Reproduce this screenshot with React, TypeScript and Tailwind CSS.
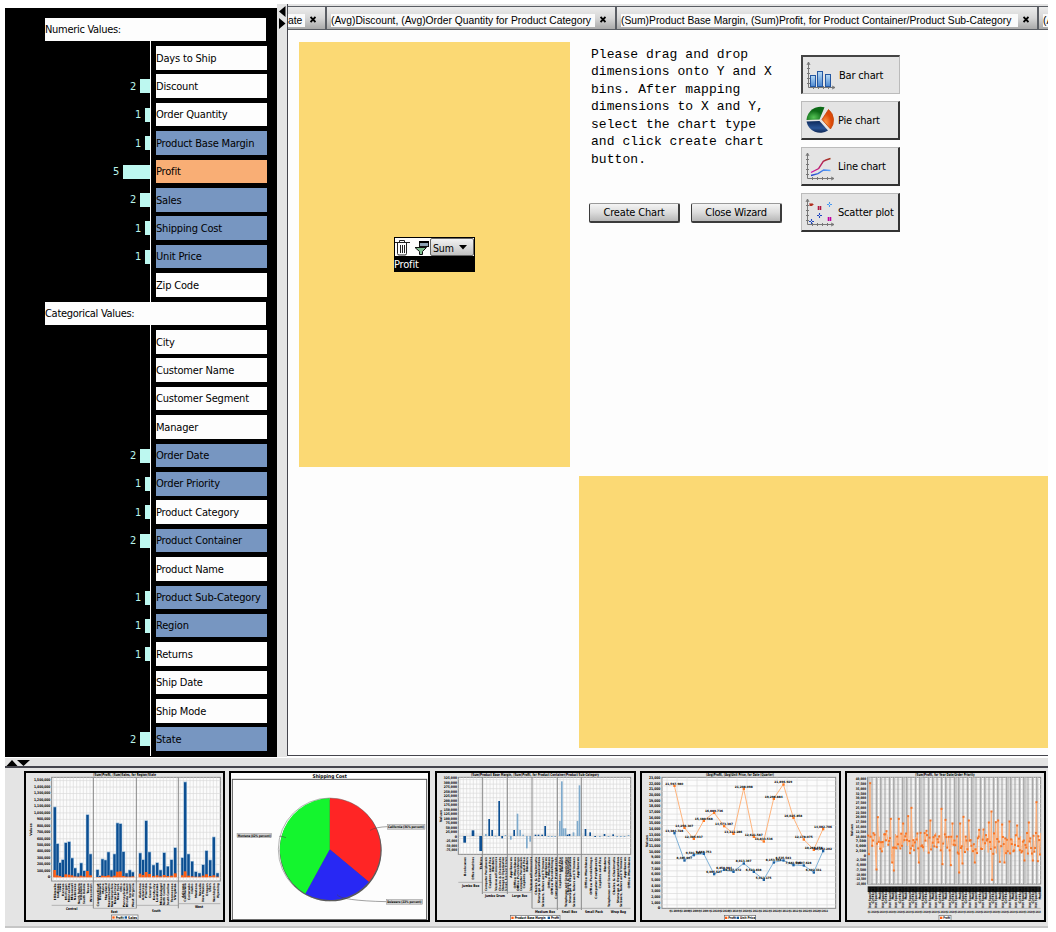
import React from "react";

type Tone = "white" | "blue" | "orange";
type Field = { name: string; count?: number; tone: Tone };

const numeric: Field[] = [
  { name: "Days to Ship", tone: "white" },
  { name: "Discount", count: 2, tone: "white" },
  { name: "Order Quantity", count: 1, tone: "white" },
  { name: "Product Base Margin", count: 1, tone: "blue" },
  { name: "Profit", count: 5, tone: "orange" },
  { name: "Sales", count: 2, tone: "blue" },
  { name: "Shipping Cost", count: 1, tone: "blue" },
  { name: "Unit Price", count: 1, tone: "blue" },
  { name: "Zip Code", tone: "white" },
];

const categorical: Field[] = [
  { name: "City", tone: "white" },
  { name: "Customer Name", tone: "white" },
  { name: "Customer Segment", tone: "white" },
  { name: "Manager", tone: "white" },
  { name: "Order Date", count: 2, tone: "blue" },
  { name: "Order Priority", count: 1, tone: "blue" },
  { name: "Product Category", count: 1, tone: "white" },
  { name: "Product Container", count: 2, tone: "blue" },
  { name: "Product Name", tone: "white" },
  { name: "Product Sub-Category", count: 1, tone: "blue" },
  { name: "Region", count: 1, tone: "blue" },
  { name: "Returns", count: 1, tone: "white" },
  { name: "Ship Date", tone: "white" },
  { name: "Ship Mode", tone: "white" },
  { name: "State", count: 2, tone: "blue" },
];

const toneClass: Record<Tone, string> = {
  white: "bg-[#fdfdfd]",
  blue: "bg-[#7796c1]",
  orange: "bg-[#f9ae75]",
};

function SectionHeader({ title }: { title: string }) {
  return (
    <div className="h-[28.4px]">
      <div className="ml-[40px] flex h-[23.4px] w-[221px] items-center bg-[#fdfdfd] pt-[2px] tracking-[-0.3px]">{title}</div>
      <div className="h-[5px] w-[146px] border-r border-white" />
    </div>
  );
}

function FieldRow({ field }: { field: Field }) {
  const n = field.count ?? 0;
  return (
    <div className="flex h-[28.4px]">
      <div className="flex h-full w-[146px] justify-end border-r border-white">
        {n > 0 && (
          <>
            <span className="mr-[4px] flex h-[23.4px] items-center pt-[1.500px] text-[#b9f5ea]">{n}</span>
            <span className="mt-[5px] h-[14px] bg-[#bdf8f0]" style={{ width: n === 5 ? 27 : n * 5 }} />
          </>
        )}
      </div>
      <div className={`ml-[5px] flex h-[23.6px] w-[111px] items-center pt-[1.500px] whitespace-nowrap ${toneClass[field.tone]}`}>
        {field.name}
      </div>
    </div>
  );
}

function Tab({ label, width, labelWidth, clip }: { label: string; width: string; labelWidth: string; clip?: boolean }) {
  return (
    <div
      className={`flex h-full shrink-0 items-center overflow-hidden border-r-2 border-[#5a5d63] bg-linear-to-b from-[#ececec] via-[#d6d6d6] to-[#a9a9a9] ${width} ${clip ? "" : "pl-[4px]"}`}
    >
      <span className={`mt-[4px] h-[13px] shrink-0 bg-[#fafafa] leading-[13px] whitespace-nowrap ${labelWidth}`}>
        {label}
      </span>
      <svg className="mt-[3px] ml-[5px] shrink-0" width="6" height="7" viewBox="0 0 6 7">
        <path d="M.5 1L5.5 6M5.5 1L.5 6" stroke="#000" strokeWidth="1.9" />
      </svg>
    </div>
  );
}

function Axes() {
  return (
    <g stroke="#777" fill="none" strokeWidth="1">
      <path d="M3.5 2V27.5H30" />
      <path d="M2 5l1.5-3L5 5M27 26l3 1.5L27 29M2 8.5h3M2 13.5h3M2 18.5h3M2 23.5h3M8.500 26v3M13.500 26v3M18.500 26v3M23.500 26v3" />
    </g>
  );
}

function BarIcon() {
  return (
    <svg className="mt-px" width="34" height="32" viewBox="0 0 34 32">
      <defs>
        <linearGradient id="bar" x2="0" y2="1">
          <stop offset="0" stopColor="#b9dcf5" />
          <stop offset="1" stopColor="#4a86d0" />
        </linearGradient>
      </defs>
      <Axes />
      {[[5.5, 15.5], [12.5, 11.5], [20.5, 14.5]].map(([x, y]) => (
        <rect key={x} x={x} y={y} width="5" height={26.5 - y} fill="url(#bar)" stroke="#2456a0" />
      ))}
    </svg>
  );
}

function PieIcon() {
  return (
    <svg width="34" height="32" viewBox="0 0 34 32">
      <defs>
        <radialGradient id="pg" cx=".4" cy=".8"><stop offset="0" stopColor="#55c355" /><stop offset="1" stopColor="#0d6a17" /></radialGradient>
        <radialGradient id="po" cx=".3" cy=".7"><stop offset="0" stopColor="#ff9c48" /><stop offset="1" stopColor="#dc4908" /></radialGradient>
        <linearGradient id="pb" x2="0" y2="1"><stop offset="0" stopColor="#0d2a5c" /><stop offset=".6" stopColor="#2a5596" /><stop offset="1" stopColor="#0d2553" /></linearGradient>
      </defs>
      <path d="M15.500 15.500L2.500 16A14 14 0 0 1 20.500 3.300Z" fill="url(#pg)" />
      <path d="M18 15.500L24.500 5.500A14 14 0 0 1 26.500 25Z" fill="url(#po)" stroke="#c04408" strokeWidth=".8" />
      <path d="M2.500 17.500L15.500 17L24 26.500A14 14 0 0 1 2.500 17.500Z" fill="url(#pb)" />
    </svg>
  );
}

function LineIcon() {
  return (
    <svg className="mt-px" width="34" height="32" viewBox="0 0 34 32">
      <defs>
        <linearGradient id="lr"><stop offset="0" stopColor="#d00fb0" /><stop offset="1" stopColor="#a03414" /></linearGradient>
        <linearGradient id="lb"><stop offset="0" stopColor="#2444c8" /><stop offset="1" stopColor="#5aa8ff" /></linearGradient>
      </defs>
      <Axes />
      <path d="M7 21.500L14.700 17.500L19.300 10.300L22 9L26.500 7.500" fill="none" stroke="url(#lr)" strokeWidth="1.400" />
      <path d="M7 24.500L14 22.700L19.700 19L26.500 19.500" fill="none" stroke="url(#lb)" strokeWidth="1.400" />
    </svg>
  );
}

function ScatterIcon() {
  return (
    <svg className="mt-px" width="34" height="32" viewBox="0 0 34 32">
      <Axes />
      <g fill="none" strokeWidth="1.100">
        <path d="M5.500 6.500l3 2M5.500 8.500l3-2M5.500 7.500h4" stroke="#b03020" />
        <path d="M13.500 10h4M13.500 12h4M14.500 9v4M16.500 9v4" stroke="#b01840" />
        <path d="M23.500 21h4M23.500 23h4M24.500 20v4M26.500 20v4" stroke="#c000a0" />
        <path d="M23 7.500h5M25.500 5v5" stroke="#4a9af0" strokeDasharray="2 1" />
        <path d="M13 18.500h5M15.500 16v5M5 24.500h5M7.500 22v5" stroke="#2048c0" strokeDasharray="2 1" />
      </g>
    </svg>
  );
}

const chartTypes = [
  { label: "Bar chart", icon: <BarIcon />, active: true },
  { label: "Pie chart", icon: <PieIcon />, active: false },
  { label: "Line chart", icon: <LineIcon />, active: false },
  { label: "Scatter plot", icon: <ScatterIcon />, active: false },
];

/* ---------- thumbnails: every drawing uses three units per pixel ---------- */

const T = ({ x, y, s, a = "middle", w, size = 12 }: { x: number; y: number; s: string; a?: "start" | "middle" | "end"; w?: number; size?: number }) => (
  <text x={x} y={y} textAnchor={a} fontSize={size} textLength={w} lengthAdjust="spacingAndGlyphs" className="font-bold">
    {s}
  </text>
);

const VLabel = ({ x, y, s, size = 10, max = 72 }: { x: number; y: number; s: string; size?: number; max?: number }) => (
  <text
    transform={`translate(${x + 3.5} ${y}) rotate(-90)`}
    textAnchor="end"
    fontSize={size}
    textLength={Math.min(max, s.length * 6.3)}
    lengthAdjust="spacingAndGlyphs"
    className="font-bold"
  >
    {s}
  </text>
);

function Thumb({ box, light, children }: { box: string; light?: boolean; children: React.ReactNode }) {
  return (
    <div className={`h-[151px] w-[201px] shrink-0 border-2 border-black ${light ? "bg-[#fdfdfd]" : "bg-[#e4e4e4]"}`}>
      <svg className="block font-['DejaVu_Sans',sans-serif] tracking-[0px]" width="197" height="147" viewBox={box}>
        {children}
      </svg>
    </div>
  );
}

function Grid({ x, y, w, h, dx, dy }: { x: number; y: number; w: number; h: number; dx: number; dy: number }) {
  const v = Array.from({ length: Math.floor(w / dx) }, (_, i) => x + (i + 0.5) * dx);
  const r = Array.from({ length: Math.floor(h / dy) }, (_, i) => y + (i + 0.5) * dy);
  return (
    <g>
      <rect x={x} y={y} width={w} height={h} fill="#fcfcfc" stroke="#888" strokeWidth="3" />
      <g stroke="#dadada" strokeWidth="2">
        {v.map((p) => <path key={`v${p}`} d={`M${p} ${y}v${h}`} />)}
        {r.map((p) => <path key={`h${p}`} d={`M${x} ${p}h${w}`} />)}
      </g>
    </g>
  );
}

function Legend({ x, y, w, items }: { x: number; y: number; w: number; items: { x: number; s: string; c: string; w: number }[] }) {
  return (
    <g>
      <rect x={x} y={y} width={w} height="15" fill="#fff" stroke="#666" strokeWidth="2" />
      {items.map((i) => (
        <g key={i.s}>
          <rect x={i.x} y={y + 4} width="7" height="7" fill={i.c} />
          <T x={i.x + 10} y={y + 12} s={i.s} a="start" w={i.w} size={11} />
        </g>
      ))}
    </g>
  );
}

const ORANGE = "#ff5c10";
const BLUE = "#0d4f92";

type StateBar = [string, number, number, number];
const stateBars: StateBar[] = [
  ["Illinois", 164, 172, 360], ["Indiana", 172, 282, 376], ["Iowa", 180, 339, 378], ["Kansas", 188, 330, 381],
  ["Michigan", 197, 279, 373], ["Minnesota", 207, 276, 374], ["Missouri", 216, 325, 376], ["Nebraska", 225, 355, 379],
  ["North Dakota", 235, 370, 380], ["Oklahoma", 243, 340, 377], ["South Dakota", 252, 363, 379], ["Texas", 262, 195, 363],
  ["Wisconsin", 271, 313, 376], ["Connecticut", 292, 360, 381], ["Delaware", 299, 378, 381], ["Maine", 307, 328, 377],
  ["Maryland", 316, 331, 378], ["Massachusetts", 325, 307, 376], ["New Hampshire", 334, 361, 380], ["New Jersey", 343, 313, 377],
  ["New York", 352, 220, 365], ["Ohio", 361, 222, 364], ["Pennsylvania", 370, 306, 378], ["Rhode Island", 379, 370, 380],
  ["Vermont", 389, 361, 380], ["West Virginia", 398, 367, 379], ["Alabama", 420, 310, 371], ["Arkansas", 429, 330, 375],
  ["Florida", 438, 213, 366], ["Georgia", 448, 307, 372], ["Kentucky", 460, 346, 378], ["Louisiana", 471, 339, 376],
  ["Mississippi", 481, 361, 379], ["North Carolina", 492, 309, 375], ["South Carolina", 503, 350, 378], ["Tennessee", 514, 330, 377],
  ["Virginia", 525, 294, 370], ["Arizona", 547, 324, 376], ["California", 555, 97, 364], ["Colorado", 565, 313, 377],
  ["Idaho", 576, 335, 379], ["Montana", 587, 366, 380], ["Nevada", 598, 370, 380], ["New Mexico", 609, 345, 377],
  ["Oregon", 619, 303, 373], ["Utah", 630, 331, 378], ["Washington", 641, 262, 376], ["Wyoming", 652, 370, 380],
];

function SalesThumb() {
  return (
    <Thumb box="78 69 591 441">
      <T x={374} y={79} s="(Sum)Profit, (Sum)Sales, for Region/State" w={188} />
      <Grid x={155} y={82} w={506} h={311} dx={10} dy={19.4} />
      {Array.from({ length: 16 }, (_, i) => (
        <T key={i} x={151} y={385 - i * 19.4} s={i === 0 ? "0" : `${(i * 100000).toLocaleString("en-US")}`} a="end" size={11} w={i === 0 ? undefined : i > 9 ? 49 : 40} />
      ))}
      <path d="M280 82v393M409 82v393M535 82v393" stroke="#8a8a8a" strokeWidth="3" />
      {stateBars.map(([name, x, top, mid]) => (
        <g key={name}>
          <rect x={x - 4.500} y={top - 2} width="10" height={383 - top} fill="#8eb4d4" />
          <rect x={x - 3} y={top} width="7" height={381 - top} fill={BLUE} />
          <rect x={x - 4} y={mid} width="9" height={382 - mid} fill={ORANGE} />
          <VLabel x={x} y={400} s={name} size={9} max={x < 280 ? 62 : x < 410 ? 72 : x < 535 ? 66 : 55} />
        </g>
      ))}
      <path d="M155 466h125M280 475h129M409 466h126M535 461h126" stroke="#999" strokeWidth="2" />
      <T x={215} y={481} s="Central" w={34} size={11} />
      <T x={343} y={490} s="East" w={20} size={11} />
      <T x={469} y={486} s="South" w={26} size={11} />
      <T x={597} y={475} s="West" w={24} size={11} />
      <text transform="translate(97 257) rotate(-90)" fontSize="10" className="font-bold">Values</text>
      <Legend x={334} y={495} w={80} items={[{ x: 337, s: "Profit", c: ORANGE, w: 24 }, { x: 374, s: "Sales", c: BLUE, w: 27 }]} />
    </Thumb>
  );
}

function PieThumb() {
  return (
    <Thumb box="15 24 591 441" light>
      <T x={311} y={38} s="Shipping Cost" w={103} size={15} />
      <rect x="19" y="43" width="583" height="421" fill="#fdfdfd" stroke="#555" strokeWidth="3" />
      <circle cx="314" cy="256" r="153" fill="#555" />
      <path d="M311 253V99A154 154 0 0 1 429 351Z" fill="#ff2525" />
      <path d="M311 253L429 351A154 154 0 0 1 238 386Z" fill="#2828f4" />
      <path d="M311 253L238 386A154 154 0 0 1 311 99Z" fill="#14f52e" />
      <circle cx="311" cy="253" r="154" fill="none" stroke="#666" strokeWidth="1.500" />
      <path d="M432 196Q450 186 484 185M333 389Q345 407 481 410M180 218Q165 212 160 214" fill="none" stroke="#444" strokeWidth="1.500" />
      <g fill="#cfcfcf" stroke="#777">
        <rect x="484" y="178" width="113" height="15" />
        <rect x="481" y="403" width="109" height="15" />
        <rect x="33" y="205" width="104" height="13" />
      </g>
      <T x={540} y={190} s="California (36% percent)" w={108} size={10} />
      <T x={535} y={415} s="Delaware (22% percent)" w={103} size={10} />
      <T x={85} y={215} s="Montana (42% percent)" w={99} size={10} />
    </Thumb>
  );
}

const marginBars: [number, number, boolean][] = [
  [103, 233, false], [128, 196, false], [151, 258, false], [168, 207, true], [178, 162, false], [187, 195, false],
  [197, 212, true], [208, 108, false], [217, 220, false], [227, 210, true], [243, 224, true], [253, 195, false], [263, 146, true],
  [271, 195, true], [280, 209, true], [291, 250, true], [301, 230, true], [317, 209, false], [326, 209, false],
  [337, 209, false], [346, 183, false], [356, 215, true], [366, 215, true], [376, 215, true], [390, 168, true], [396, 49, true],
  [401, 190, true], [407, 190, true], [413, 209, false], [419, 207, false], [431, 202, true], [443, 168, true],
  [449, 61, true], [467, 192, false], [481, 202, false], [496, 215, false], [510, 216, true], [524, 207, false],
  [536, 215, true], [550, 208, false], [562, 215, true], [573, 215, true], [584, 215, true], [596, 210, true],
];
const products = ["Appliances", "Chairs & Chairmats", "Copiers and Fax", "Office Machines", "Storage & Organization", "Binders", "Office Furnishings", "Scissors, Rulers and Trimmers", "Telephones and Communication", "Computer Peripherals"];
const jumboBox = ["Bookcases", "Office Machines", "Tables"];

function MarginThumb() {
  return (
    <Thumb box="21 24 591 441">
      <T x={315} y={34} s="(Sum)Product Base Margin, (Sum)Profit, for Product Container/Product Sub-Category" w={384} />
      <Grid x={85} y={37} w={517} h={231} dx={10} dy={13.6} />
      {Array.from({ length: 17 }, (_, i) => (
        <T key={i} x={81} y={43 + i * 13.5} s={`${((13 - i) * 25000).toLocaleString("en-US")}`} a="end" size={10} w={i === 13 ? undefined : i > 9 ? 34 : 40} />
      ))}
      <path d="M157 37v350M232 37v350M306 37v393M382 37v398M454 37v398" stroke="#888" strokeWidth="3" />
      <path d="M85 213h517" stroke="#bbb" strokeWidth="2" />
      {marginBars.map(([x, v, pale], i) => (
        <rect key={x} x={x - 3} y={Math.min(v, 213)} width={i < 3 ? 8 : 5} height={Math.max(3, Math.abs(213 - v))} fill={pale ? "#7faacc" : BLUE} />
      ))}
      {marginBars.filter(([x]) => x !== 401 && x !== 449).map(([x], i) => (
        <VLabel key={x} x={x} y={276} s={i < 3 ? jumboBox[i] : products[(i * 3) % 10]} size={9} max={x < 157 ? 68 : x < 306 ? 102 : 150} />
      ))}
      <path d="M85 352h72M157 382h149M306 430h296" stroke="#999" strokeWidth="2" />
      <T x={122} y={366} s="Jumbo Box" w={52} size={11} />
      <T x={195} y={396} s="Jumbo Drum" w={60} size={11} />
      <T x={269} y={396} s="Large Box" w={46} size={11} />
      <T x={345} y={444} s="Medium Box" w={60} size={11} />
      <T x={418} y={444} s="Small Box" w={46} size={11} />
      <T x={492} y={444} s="Small Pack" w={54} size={11} />
      <T x={565} y={444} s="Wrap Bag" w={46} size={11} />
      <text transform="translate(37 172) rotate(-90)" fontSize="10" className="font-bold">Values</text>
      <Legend x={241} y={451} w={149} items={[{ x: 244, s: "Product Base Margin", c: ORANGE, w: 93 }, { x: 353, s: "Profit", c: BLUE, w: 24 }]} />
    </Thumb>
  );
}

const lineX = [115, 145, 173, 203, 234, 264, 292, 323, 353, 383, 413, 442, 472, 503, 533, 561];
const profitY = [62, 188, 221, 167, 143, 183, 206, 71, 215, 229, 101, 58, 158, 223, 254, 192];
const priceY = [204, 286, 270, 266, 327, 314, 320, 295, 320, 344, 292, 286, 300, 301, 322, 258];
const profitText = ["21,597.980", "14,256.307", "12,305.937", "15,480.568", "16,889.736", "14,573.387", "13,111.286", "21,208.098", "12,621.587", "11,833.536", "19,296.884", "21,896.929", "16,025.858", "12,178.075", "10,268.556", "14,082.706"];
const priceText = ["13,384.728", "8,485.907", "9,501.480", "9,668.753", "6,095.527", "6,858.984", "6,507.372", "8,013.397", "6,523.838", "5,013.175", "8,153.556", "8,535.583", "7,682.585", "7,607.628", "6,402.331", "10,192.202"];

function LineThumb() {
  const series = [
    { ys: profitY, text: profitText, line: "#ffb47c", dot: "#ff7a22" },
    { ys: priceY, text: priceText, line: "#7fb2d8", dot: "#1c62a4" },
  ];
  return (
    <Thumb box="18 24 591 441">
      <T x={312} y={34} s="(Avg)Profit, (Avg)Unit Price, for Date (Quarter)" w={204} />
      <Grid x={78} y={37} w={521} h={393} dx={30} dy={17} />
      {Array.from({ length: 24 }, (_, i) => (
        <T key={i} x={73} y={433 - i * 17} s={i === 0 ? "0" : `${i},000`} a="end" size={11} w={i === 0 ? undefined : i > 9 ? 34 : 27} />
      ))}
      {series.map((s) => (
        <g key={s.dot}>
          <polyline points={lineX.map((x, i) => `${x},${s.ys[i]}`).join(" ")} fill="none" stroke={s.line} strokeWidth="3" />
          {lineX.map((x, i) => (
            <g key={x}>
              <rect x={x - 3} y={s.ys[i] - 3} width="7" height="7" fill={s.dot} />
              <T x={x} y={s.ys[i] - 3} s={s.text[i]} w={s.text[i].length < 10 ? 47 : 54} size={9} />
            </g>
          ))}
        </g>
      ))}
      {lineX.map((x, i) => (
        <T key={x} x={x} y={442} s={`Q${(i % 4) + 1} ${2009 + Math.floor(i / 4)}`} w={29} size={9} />
      ))}
      <text transform="translate(37 247) rotate(-90)" fontSize="10" className="font-bold">Values</text>
      <Legend x={265} y={451} w={94} items={[{ x: 267, s: "Profit", c: ORANGE, w: 23 }, { x: 302, s: "Unit Price", c: BLUE, w: 46 }]} />
    </Thumb>
  );
}

const noise = (i: number) => {
  const v = Math.sin(i * 127.1 + 31.7) * 43758.5453;
  return v - Math.floor(v);
};
const peaks: [number, number][] = [
  [84, 54], [94, 204], [103, 313], [107, 156], [133, 198], [146, 161], [150, 292], [155, 316], [170, 161], [183, 175],
  [198, 153], [208, 128], [230, 292], [253, 197], [265, 166], [298, 131], [301, 297], [310, 164], [326, 300], [331, 175],
  [351, 322], [354, 175], [361, 295], [364, 155], [380, 166], [398, 292], [411, 194], [424, 193], [440, 172], [448, 139],
  [450, 344], [461, 171], [468, 166], [473, 290], [480, 178], [487, 292], [502, 169], [525, 181], [547, 286], [560, 172],
  [572, 286], [583, 111], [587, 288],
];
const priorityPoints: [number, number][] = Array.from({ length: 215 }, (_, i): [number, number] => [
  78 + i * 2.42,
  203 + noise(i) * 65,
])
  .filter(([x]) => !peaks.some(([px]) => Math.abs(px - x) < 1.2))
  .concat(peaks)
  .sort((a, b) => a[0] - b[0]);

function PriorityThumb() {
  const cols = Array.from({ length: 40 }, (_, i) => 77 + i * 13);
  return (
    <Thumb box="15 24 591 441">
      <T x={309} y={34} s="(Sum)Profit, for Year Date/Order Priority" w={178} />
      <Grid x={77} y={37} w={519} h={320} dx={6.500} dy={14.3} />
      {cols.map((x, i) => (
        <g key={x}>
          {i % 3 !== 1 && <rect x={x + 1} y="38" width={i % 4 === 0 ? 8 : 4} height="319" fill="#c9c9c9" />}
          <path d={`M${x} 38v320`} stroke="#8d8d8d" strokeWidth="2.500" />
        </g>
      ))}
      {Array.from({ length: 23 }, (_, i) => (
        <T key={i} x={72} y={46 + i * 14.3} s={i === 16 ? "0" : `${(40000 - i * 2500).toLocaleString("en-US")}`} a="end" size={10} w={i === 16 ? undefined : 31} />
      ))}
      <polyline points={priorityPoints.map((p) => p.join(",")).join(" ")} fill="none" stroke="#ffae77" strokeWidth="3" />
      {priorityPoints.filter((p, i) => i % 5 !== 4 || p[1] < 200 || p[1] > 270).map(([x, y]) => (
        <rect key={x} x={x - 2.500} y={y - 2.500} width="6" height="6" fill="#f77526" />
      ))}
      <rect x="77" y="364" width="519" height="17" fill="#222" />
      {Array.from({ length: 52 }, (_, i) => (
        <VLabel key={i} x={82 + i * 10} y={366} s={["Not Specified", "Critical", "Not Specified", "Medium"][i % 4]} size={10} max={62} />
      ))}
      <path d="M77 430h519" stroke="#999" strokeWidth="2" />
      {Array.from({ length: 20 }, (_, i) => (
        <T key={i} x={90 + i * 26} y={444} s={`Q${(i % 4) + 1} 2010`} w={25} size={9} />
      ))}
      <text transform="translate(33 214) rotate(-90)" fontSize="10" className="font-bold">Values</text>
      <Legend x={291} y={451} w={36} items={[{ x: 294, s: "Profit", c: ORANGE, w: 20 }]} />
    </Thumb>
  );
}

export default function App() {
  return (
    <div className="flex h-[932px] w-[1056px] flex-col overflow-hidden bg-white pt-[4px] pl-[5px] font-['DejaVu_Sans_Condensed','DejaVu_Sans',sans-serif] text-[11px] leading-[14px] tracking-[-0.18px] text-black">
      <div className="flex h-[753px] w-[1043px]">
        <aside className="mt-[4px] h-[749px] w-[272px] shrink-0 bg-black pt-[9.700px]">
          <SectionHeader title="Numeric Values:" />
          {numeric.map((f) => <FieldRow key={f.name} field={f} />)}
          <SectionHeader title="Categorical Values:" />
          {categorical.map((f) => <FieldRow key={f.name} field={f} />)}
        </aside>
        <div className="w-[10px] shrink-0 bg-[#e4e4e4] pl-[1px]">
          <svg width="9" height="26" viewBox="0 0 9 26">
            <path d="M7.500 2v11L1 7.500ZM1 14v11l6.500-5.500Z" />
          </svg>
        </div>
        <main className="flex h-[752px] w-[761px] flex-col border-b border-l border-[#45454d] bg-[#fdfdfd]">
          <div className="h-[2px] shrink-0 bg-[#e4e4e4]" />
          <div className="flex h-[24px] shrink-0 overflow-hidden border-t border-b border-[#5a5d63] font-['Liberation_Sans',sans-serif] text-[10.300px] tracking-[0px]">
            <Tab clip label="ate" width="w-[39px]" labelWidth="w-[17px]" />
            <Tab label="(Avg)Discount, (Avg)Order Quantity for Product Category" width="w-[290px]" labelWidth="w-[264px]" />
            <Tab label="(Sum)Product Base Margin, (Sum)Profit, for Product Container/Product Sub-Category" width="w-[422px]" labelWidth="w-[397px]" />
            <Tab label="(Avg)" width="w-[80px]" labelWidth="w-[70px]" />
          </div>
          <div className="flex pt-[12px] pl-[11px]">
            <section className="flex h-[425px] w-[271px] items-start justify-center bg-[#fbd974] pt-[195px]">
              <div className="h-[35px] w-[81px] border border-black bg-black">
                <div className="flex h-[18px] bg-[#fdfdfd]">
                  <svg width="35" height="18" viewBox="0 0 35 18">
                    <path d="M0 4.500h15M4.500 4V2.500h5V4M2.500 5v10.500q0 1.500 1.500 1.500h6q1.500 0 1.500-1.500V5M5.500 7v8M7.500 7v8M9.500 7v8" fill="none" stroke="#222" />
                    <rect x="24.500" y="3.500" width="9" height="5" fill="#8fa3b5" stroke="#111" />
                    <path d="M24 3h10v2H24z" />
                    <path d="M20 9.500H31.500L27.500 13.500V16.500H24.500V13.500Z" fill="#7fbf8f" stroke="#111" />
                  </svg>
                  <div className="flex w-[44px] items-center justify-between rounded-[2px] border border-[#666] bg-linear-to-b from-[#f2f2f2] to-[#c2c2c2] pt-px pr-[6px] pl-[2px] text-[10.500px]">
                    Sum
                    <svg width="8" height="5" viewBox="0 0 8 5"><path d="M0 0h8L4 4.500Z" /></svg>
                  </div>
                </div>
                <div className="-ml-px h-[15px] leading-[17px] text-white">Profit</div>
              </div>
            </section>
            <section className="ml-[19px] w-[193px] pt-[3.500px]">
              <p className="ml-[2px] w-[187px] font-['Liberation_Mono',monospace] text-[13px] leading-[17.600px] tracking-[0.06px]">
                Please drag and drop dimensions onto Y and X bins. After mapping dimensions to X and Y, select the chart type and click create chart button.
              </p>
              <div className="mt-[34.800px] flex gap-[11px]">
                {["Create Chart", "Close Wizard"].map((b) => (
                  <button key={b} className="h-[20px] w-[91px] rounded-[2px] border border-t-[#999] border-r-2 border-b-2 border-[#3c3c3c] bg-linear-to-b from-[#f4f4f4] via-[#dcdcdc] to-[#b8b8b8] pt-px whitespace-nowrap">
                    {b}
                  </button>
                ))}
              </div>
            </section>
            <section className="ml-[19px] flex flex-col gap-[7px] pt-[13px]">
              {chartTypes.map((c) => (
                <button
                  key={c.label}
                  className={`flex h-[39px] w-[99px] items-center bg-[#e4e4e4] pl-[2px] text-left whitespace-nowrap ${
                    c.active
                      ? "border-t-2 border-r border-b border-l-2 border-[#bbb] border-t-[#444] border-l-[#444]"
                      : "border-t border-r-2 border-b-2 border-l border-[#bbb] border-r-[#333] border-b-[#333]"
                  }`}
                >
                  {c.icon}
                  <span className="pt-px">{c.label}</span>
                </button>
              ))}
            </section>
          </div>
          <section className="mt-[9px] h-[272px] w-[469px] self-end bg-[#fbd974]" />
        </main>
      </div>
      <div className="mt-[1px] flex h-[10px] w-[1043px] shrink-0 border-b-2 border-[#45454d] bg-[#e4e4e4]">
        <svg width="28" height="8" viewBox="0 0 28 8">
          <path d="M1.500 8h11L7 2ZM12 2h13L18.500 8Z" />
        </svg>
      </div>
      <div className="flex h-[160px] w-[1043px] shrink-0 border-b-2 border-[#c6c6c6] bg-[#e4e4e4] pt-[3px] pl-[19px]">
        <div className="mr-[5px] flex gap-[4px]">
          <SalesThumb />
          <PieThumb />
        </div>
        <div className="flex gap-[4px]">
          <MarginThumb />
          <LineThumb />
          <PriorityThumb />
        </div>
      </div>
    </div>
  );
}
